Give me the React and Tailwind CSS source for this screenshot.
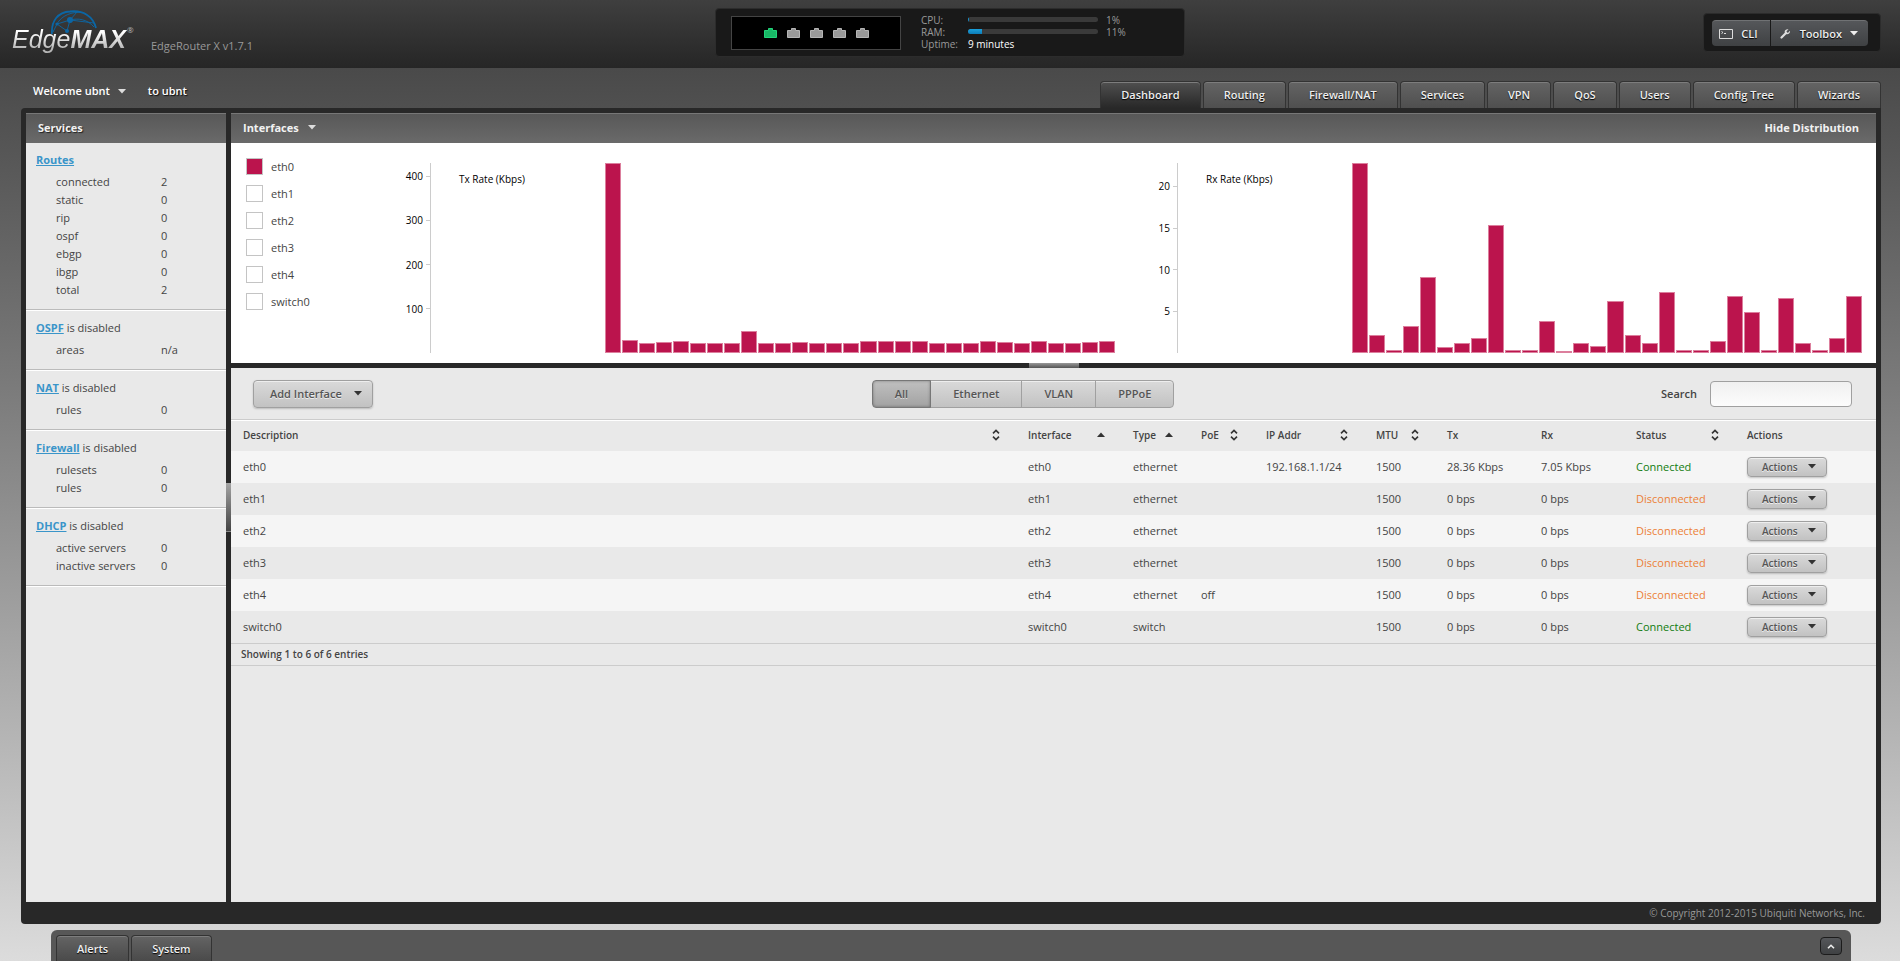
import React, { useState } from 'react';

const PORTS = [true, false, false, false, false];

const TABS = ['Dashboard', 'Routing', 'Firewall/NAT', 'Services', 'VPN', 'QoS', 'Users', 'Config Tree', 'Wizards'];

const SERVICES = [
  {
    name: 'Routes',
    rows: [['connected', '2'], ['static', '0'], ['rip', '0'], ['ospf', '0'], ['ebgp', '0'], ['ibgp', '0'], ['total', '2']],
  },
  { name: 'OSPF', note: 'is disabled', rows: [['areas', 'n/a']] },
  { name: 'NAT', note: 'is disabled', rows: [['rules', '0']] },
  { name: 'Firewall', note: 'is disabled', rows: [['rulesets', '0'], ['rules', '0']] },
  { name: 'DHCP', note: 'is disabled', rows: [['active servers', '0'], ['inactive servers', '0']] },
];

const INTERFACES = [
  { name: 'eth0', type: 'ethernet', poe: '', ip: '192.168.1.1/24', tx: '28.36 Kbps', rx: '7.05 Kbps', up: true },
  { name: 'eth1', type: 'ethernet', poe: '', ip: '', tx: '0 bps', rx: '0 bps', up: false },
  { name: 'eth2', type: 'ethernet', poe: '', ip: '', tx: '0 bps', rx: '0 bps', up: false },
  { name: 'eth3', type: 'ethernet', poe: '', ip: '', tx: '0 bps', rx: '0 bps', up: false },
  { name: 'eth4', type: 'ethernet', poe: 'off', ip: '', tx: '0 bps', rx: '0 bps', up: false },
  { name: 'switch0', type: 'switch', poe: '', ip: '', tx: '0 bps', rx: '0 bps', up: true },
];

const TX = {
  title: 'Tx Rate (Kbps)',
  max: 430,
  ticks: [400, 300, 200, 100],
  values: [430, 29, 23, 25, 27, 23, 23, 23, 50, 23, 23, 25, 23, 23, 23, 27, 27, 27, 27, 23, 23, 23, 27, 25, 23, 27, 23, 23, 24, 27],
};

const RX = {
  title: 'Rx Rate (Kbps)',
  max: 22.8,
  ticks: [20, 15, 10, 5],
  values: [22.8, 2.2, 0.4, 3.2, 9.1, 0.7, 1.2, 1.8, 15.4, 0.4, 0.4, 3.8, 0.2, 1.2, 0.9, 6.3, 2.2, 1.2, 7.3, 0.4, 0.4, 1.5, 6.8, 4.9, 0.4, 6.6, 1.2, 0.4, 1.8, 6.8],
};

const COLUMNS = [
  { label: 'Description', sort: 'both', width: '' },
  { label: 'Interface', sort: 'up', width: 'w-[105px]' },
  { label: 'Type', sort: 'up', width: 'w-[68px]' },
  { label: 'PoE', sort: 'both', width: 'w-[65px]' },
  { label: 'IP Addr', sort: 'both', width: 'w-[110px]' },
  { label: 'MTU', sort: 'both', width: 'w-[71px]' },
  { label: 'Tx', width: 'w-[94px]' },
  { label: 'Rx', width: 'w-[95px]' },
  { label: 'Status', sort: 'both', width: 'w-[111px]' },
  { label: 'Actions', width: 'w-[141px]' },
];

const Caret = ({ className = '' }) => (
  <svg viewBox="0 0 8 5" className={`h-[5px] w-2 shrink-0 ${className}`} fill="currentColor" aria-hidden="true">
    <path d="M0 0h8L4 4.6z" />
  </svg>
);

const SortIcon = ({ kind }) =>
  kind === 'up' ? (
    <svg viewBox="0 0 8 12" className="h-3 w-2" fill="#333" aria-hidden="true">
      <path d="M0 8h8L4 3.6z" />
    </svg>
  ) : (
    <svg viewBox="0 0 8 12" className="h-3 w-2" fill="none" stroke="#333" strokeWidth="1.6" aria-hidden="true">
      <path d="M1 4.4l3-3 3 3M1 7.6l3 3 3-3" />
    </svg>
  );

const Logo = () => (
  <div className="relative flex h-12 w-[122px] items-end font-['Liberation_Sans',sans-serif] text-[25px] leading-[34px] italic">
    <svg viewBox="0 0 48 26" className="absolute top-[2px] left-[38px] h-[26px] w-12" fill="none" stroke="#0b66a5" aria-hidden="true">
      <path d="M2 24C1 11 8 2 20 1.5 33 0 43 6 46 18" strokeWidth="1.8" />
      <path d="M7 14C11 6 22 1 33 2.5M7 14l13-4 24 3M7 14l10 7 3-11 7-8M20 10c8-2 17-1 24 7M3 22l4-8" strokeWidth="0.9" />
      <g fill="#0b66a5" stroke="none">
        <circle cx="20" cy="10" r="3" />
        <circle cx="7" cy="14" r="1.6" />
        <circle cx="17" cy="21" r="2" />
      </g>
    </svg>
    <span className="relative bg-linear-to-b from-white from-30% to-[#b5b5b5] to-80% bg-clip-text pr-px text-transparent">
      Edge<b>MAX</b>
    </span>
    <sup className="self-center pt-1 font-['Open_Sans',sans-serif] text-[8px] leading-3 text-[#bbb] not-italic">®</sup>
  </div>
);

const Meter = ({ label, value }) => (
  <>
    <span>{label}:</span>
    <div className="h-[5px] overflow-hidden rounded-full bg-[#3a3a3a]">
      <div className="h-full bg-linear-to-b from-[#1aa0dc] to-[#0d7db8]" style={{ width: `${value}%` }} />
    </div>
    <span>{value}%</span>
  </>
);

const DeviceStatus = () => (
  <div className="flex h-[49px] w-[470px] items-center rounded border border-[#2c2c2c] bg-[#191919] pl-[15px]">
    <div className="flex h-[34px] w-[170px] items-center justify-center gap-[10px] border border-[#444] bg-black">
      {PORTS.map((up, i) => (
        <svg key={i} viewBox="0 0 13 10" className="h-[10px] w-[13px]" aria-hidden="true">
          <path
            d="M.5 2.5h4v-2h4v2h4v7H.5z"
            className={up ? 'fill-[#18b866] stroke-[#22d47a]' : 'fill-[#999] stroke-[#b5b5b5]'}
          />
        </svg>
      ))}
    </div>
    <div className="ml-5 grid grid-cols-[39px_130px_auto] items-center gap-x-2 pb-[2px] text-[10px] leading-3 text-[#999]">
      <Meter label="CPU" value={1} />
      <Meter label="RAM" value={11} />
      <span>Uptime:</span>
      <span className="text-white">9 minutes</span>
    </div>
  </div>
);

const darkButton =
  'flex h-[26px] items-center border-t border-[#707274] bg-linear-to-b from-[#55575a] to-[#3f4143] font-semibold text-[#eee] [text-shadow:0_1px_1px_#000]';

const Header = () => (
  <header className="grid h-[68px] grid-cols-[1fr_auto_1fr] items-start bg-linear-to-b from-[#3f3f3f] to-[#262626]">
    <div className="flex items-start pt-2 pl-3">
      <Logo />
      <span className="ml-[17px] pt-[29px] leading-[18px] text-[#999]">EdgeRouter X v1.7.1</span>
    </div>
    <div className="pt-2">
      <DeviceStatus />
    </div>
    <div className="flex justify-end pt-[13px] pr-[19px]">
      <div className="flex h-[39px] gap-px rounded border border-[#2c2c2c] bg-[#191919] py-[6px] pr-3 pl-2">
        <button className={`${darkButton} rounded-l-sm pr-3 pl-[7px]`}>
          <svg viewBox="0 0 14 10" className="mr-2 h-[10px] w-[14px]" fill="none" stroke="#ddd" aria-hidden="true">
            <path d="M.5.5h13v9H.5zM2.5 2.5L4 3.5l-1.500 1M5 4.500h2" />
          </svg>
          CLI
        </button>
        <button className={`${darkButton} rounded-r-sm pr-[10px] pl-[9px]`}>
          <svg viewBox="0 0 10 10" className="mr-[10px] h-[10px] w-[10px]" aria-hidden="true">
            <path d="M1.500 8.500L6 4" stroke="#ddd" strokeWidth="2.2" strokeLinecap="round" />
            <path d="M8.500.3L6.500 2.300l.3 1.200 1.200.3L10 1.800C10.300 4 8.700 5.700 6.500 5.300L4.700 3.500C4.300 1.300 6.200-.2 8.500.3z" fill="#ddd" />
          </svg>
          Toolbox
          <Caret className="ml-2" />
        </button>
      </div>
    </div>
  </header>
);

const tabBase = 'rounded-t border border-b-0 font-semibold text-[#eee] [text-shadow:0_1px_1px_#000]';

const NavBar = ({ tab, onSelect }) => (
  <div className="flex h-10 items-end justify-between px-[19px]">
    <div className="flex items-center self-center pt-[6px] pl-[14px] font-semibold text-white [text-shadow:1px_1px_1px_#111]">
      <button className="flex items-center font-semibold">
        Welcome ubnt
        <Caret className="ml-2 text-[#ddd]" />
      </button>
      <span className="ml-[22px]">to ubnt</span>
    </div>
    <nav className="flex gap-[2px]">
      {TABS.map((name) => (
        <button
          key={name}
          onClick={() => onSelect(name)}
          className={`${tabBase} h-[27px] border-[#333] px-5 inset-shadow-[0_1px_0_#7d7d7d] ${
            tab === name ? 'bg-linear-to-b from-[#505050] to-[#282828]' : 'bg-linear-to-b from-[#646464] to-[#4f4f4f]'
          }`}
        >
          {name}
        </button>
      ))}
    </nav>
  </div>
);

const PanelHeader = ({ children }) => (
  <div className="flex h-[30px] items-center justify-between border-t border-[#777] bg-linear-to-b from-[#585858] to-[#6a6a6a] pr-[17px] pb-[2px] pl-3 font-bold text-[#f2f2f2] [text-shadow:1px_1px_1px_#222]">
    {children}
  </div>
);

const Sidebar = () => (
  <aside className="w-[200px] shrink-0 bg-[#e9e9e9]">
    <PanelHeader>Services</PanelHeader>
    {SERVICES.map((s) => (
      <section key={s.name} className="border-b border-white">
        <div className="border-b border-[#bbb] pt-2 pb-[10px] pl-[10px] leading-[18px]">
          <h2>
            <a href={`#${s.name}`} className="font-bold text-[#3a95c9] underline">{s.name}</a> {s.note}
          </h2>
          <dl className="mt-1 grid grid-cols-[105px_auto] pl-5">
            {s.rows.map(([label, value]) => (
              <React.Fragment key={label}>
                <dt>{label}</dt>
                <dd>{value}</dd>
              </React.Fragment>
            ))}
          </dl>
        </div>
      </section>
    ))}
  </aside>
);

const Chart = ({ data }) => (
  <div className="flex h-[190px] flex-1 text-[10px] text-black">
    <div className="relative w-[50px] border-r border-[#ccc]">
      {data.ticks.map((t) => (
        <div
          key={t}
          className="absolute right-0 flex h-3 translate-y-1/2 items-center gap-[3px] leading-3"
          style={{ bottom: `${(t / data.max) * 100}%` }}
        >
          {t}
          <span className="h-px w-1 bg-[#ccc]" />
        </div>
      ))}
    </div>
    <div className="w-[174px] pt-[10px] pl-7 leading-3">{data.title}</div>
    <div className="flex flex-1 items-end gap-px">
      {data.values.map((v, i) => (
        <div
          key={i}
          className="flex-1 border border-[#dc7f9d] bg-[#bb144d]"
          style={{ height: `${(v / data.max) * 100}%` }}
        />
      ))}
    </div>
  </div>
);

const Distribution = ({ shown, onToggle }) => (
  <div className="flex h-[220px] bg-white pt-5 pr-[14px]">
    <div className="-mt-[5px] flex w-[150px] shrink-0 flex-col gap-[10px] pl-[15px]">
      {INTERFACES.map(({ name }) => (
        <label key={name} className="flex h-[17px] items-center gap-2 leading-[15px]">
          <input
            type="checkbox"
            checked={shown.includes(name)}
            onChange={() => onToggle(name)}
            className="h-[17px] w-[17px] appearance-none border border-[#c4c4c4] bg-white checked:bg-[#bb144d]"
          />
          {name}
        </label>
      ))}
    </div>
    <div className="flex flex-1 gap-[13px]">
      <Chart data={TX} />
      <Chart data={RX} />
    </div>
  </div>
);

const lightButton =
  'flex items-center rounded-sm border border-[#a0a0a0] bg-linear-to-b from-[#dadada] to-[#c2c2c2] font-semibold text-[#555] shadow-[0_1px_2px_#0003] inset-shadow-[0_1px_0_#eee] [text-shadow:0_1px_0_#eee]';

const Toolbar = ({ filter, onFilter }) => (
  <div className="flex h-[52px] items-center justify-between border-b border-[#ccc] pr-6 pl-[22px]">
    <div className="pr-3">
      <button className={`${lightButton} h-7 w-[120px] justify-between pr-[10px] pl-4`}>
        Add Interface
        <Caret className="text-[#333]" />
      </button>
    </div>
    <div className="flex">
      {['All', 'Ethernet', 'VLAN', 'PPPoE'].map((name) => (
        <button
          key={name}
          onClick={() => onFilter(name)}
          className={`-ml-px h-7 border px-[22px] font-semibold text-[#555] [text-shadow:0_1px_0_#ddd] first:ml-0 first:rounded-l-sm last:rounded-r-sm ${
            filter === name
              ? 'relative border-[#777] bg-linear-to-b from-[#c0c0c0] to-[#a2a2a2] inset-shadow-[0_0_3px_#0005]'
              : 'border-[#a0a0a0] bg-linear-to-b from-[#dadada] to-[#c2c2c2] inset-shadow-[0_1px_0_#eee]'
          }`}
        >
          {name}
        </button>
      ))}
    </div>
    <div className="flex items-center gap-[13px]">
      <label htmlFor="search" className="font-semibold">Search</label>
      <input
        id="search"
        type="text"
        className="h-[26px] w-[142px] rounded-sm border border-[#a0a0a0] bg-linear-to-b from-[#f0f0f0] to-[#fcfcfc] px-2"
      />
    </div>
  </div>
);

const InterfaceTable = ({ rows }) => (
  <table className="w-full table-fixed border-t border-white text-left">
    <thead>
      <tr className="h-[30px]">
        {COLUMNS.map((c) => (
          <th key={c.label} className={`${c.width} pr-4 pb-[2px] pl-3 text-[10px] font-semibold`}>
            <div className="flex items-center justify-between">
              {c.label}
              {c.sort && <SortIcon kind={c.sort} />}
            </div>
          </th>
        ))}
      </tr>
    </thead>
    <tbody>
      {rows.map((r) => (
        <tr key={r.name} className="h-8 whitespace-nowrap odd:bg-[#f5f5f5]">
          <td className="pl-3">{r.name}</td>
          <td className="pl-3">{r.name}</td>
          <td className="pl-3">{r.type}</td>
          <td className="pl-3">{r.poe}</td>
          <td className="pl-3">{r.ip}</td>
          <td className="pl-3">1500</td>
          <td className="pl-3">{r.tx}</td>
          <td className="pl-3">{r.rx}</td>
          <td className={`pl-3 ${r.up ? 'text-[#107c10]' : 'text-[#ec8036]'}`}>{r.up ? 'Connected' : 'Disconnected'}</td>
          <td className="pl-3">
            <button className={`${lightButton} h-5 w-20 justify-between pr-[10px] pl-[14px] text-[10px]`}>
              Actions
              <Caret className="text-[#333]" />
            </button>
          </td>
        </tr>
      ))}
    </tbody>
  </table>
);

const Dock = () => (
  <footer className="mt-[6px] mr-[49px] ml-[51px] flex h-[31px] items-end justify-between rounded-t-md bg-[#575757] pr-[9px] pl-[5px]">
    <div className="flex gap-[2px]">
      {['Alerts', 'System'].map((name) => (
        <button
          key={name}
          className={`${tabBase} h-[26px] border-[#333] bg-linear-to-b from-[#646464] to-[#4a4a4a] px-5 inset-shadow-[0_1px_0_#7d7d7d]`}
        >
          {name}
        </button>
      ))}
    </div>
    <button
      aria-label="Expand"
      className="mb-[6px] flex h-[18px] w-[22px] items-center justify-center rounded-sm border border-[#1c1c1c] bg-linear-to-b from-[#55575a] to-[#3f4143]"
    >
      <svg viewBox="0 0 8 5" className="h-[5px] w-2" fill="none" stroke="#eee" strokeWidth="1.6" aria-hidden="true">
        <path d="M1 4.3l3-3 3 3" />
      </svg>
    </button>
  </footer>
);

const App = () => {
  const [tab, setTab] = useState('Dashboard');
  const [filter, setFilter] = useState('All');
  const [shown, setShown] = useState(['eth0']);
  const [showChart, setShowChart] = useState(true);

  const toggle = (name) =>
    setShown(shown.includes(name) ? shown.filter((n) => n !== name) : [...shown, name]);

  const rows = INTERFACES.filter((r) => filter === 'All' || r.type === filter.toLowerCase());

  return (
    <div className="flex min-h-screen flex-col bg-linear-to-b from-[#404040] to-[#dcdcdc] font-['Open_Sans',sans-serif] text-[11px] leading-4 text-[#444]">
      <Header />
      <NavBar tab={tab} onSelect={setTab} />

      <div className="mr-[19px] ml-[21px] flex flex-1 flex-col rounded-b rounded-tl bg-[#282828] px-[5px] pt-[5px]">
        <main className="flex flex-1">
          <Sidebar />

          {/* Vertical splitter */}
          <div className="flex w-[5px] shrink-0 flex-col pt-[370px]">
            <div className="h-[49px] border-b border-[#888] bg-linear-to-b from-[#a5a5a5] to-[#444]" />
          </div>

          <div className="flex min-w-0 flex-1 flex-col bg-[#e9e9e9]">
            <PanelHeader>
              <button className="flex items-center font-bold">
                Interfaces
                <Caret className="ml-[9px] text-[#ddd]" />
              </button>
              <button className="font-bold" onClick={() => setShowChart(!showChart)}>
                {showChart ? 'Hide' : 'Show'} Distribution
              </button>
            </PanelHeader>
            {showChart && <Distribution shown={shown} onToggle={toggle} />}

            {/* Horizontal splitter */}
            <div className="flex h-[5px] justify-center bg-[#282828]">
              <div className="w-[50px] bg-linear-to-b from-[#999] to-[#555]" />
            </div>

            <Toolbar filter={filter} onFilter={setFilter} />
            <InterfaceTable rows={rows} />
            <div className="border-y border-[#ccc] pl-[10px] text-[10px] leading-[21px] font-semibold">
              Showing 1 to {rows.length} of {rows.length} entries
            </div>
          </div>
        </main>
        <div className="h-[22px] pr-[11px] text-right text-[10px] leading-[22px] text-[#999]">
          © Copyright 2012-2015 Ubiquiti Networks, Inc.
        </div>
      </div>

      <Dock />
    </div>
  );
};

export default App;
